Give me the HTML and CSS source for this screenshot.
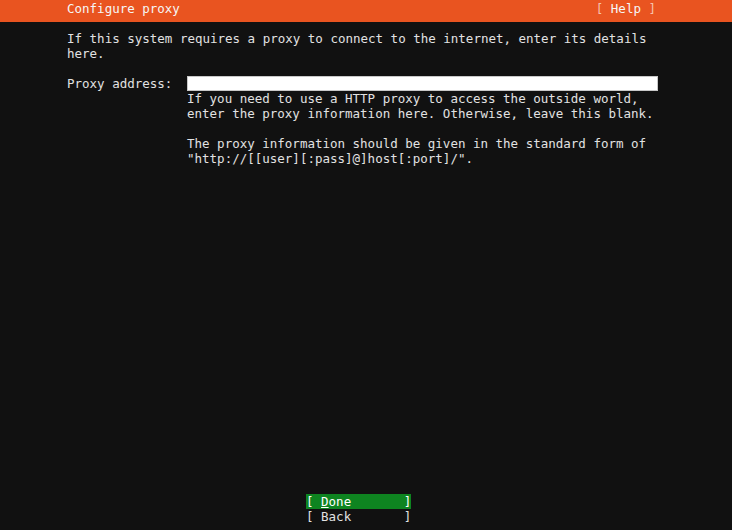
FILE: index.html
```html
<!DOCTYPE html>
<html lang="en">
<head>
  <meta charset="UTF-8">
  <meta name="viewport" content="width=device-width, initial-scale=1.0">
  <title>Configure proxy</title>
  <link rel="stylesheet" href="styles.css">
</head>
<body>
  <!-- Title bar -->
  <div class="header">
    <span class="title">Configure proxy</span>
    <span class="help"><span class="bracket">[</span> Help <span class="bracket">]</span></span>
  </div>

  <div class="main">
    <p class="intro">If this system requires a proxy to connect to the internet, enter its details<br>here.</p>

    <div class="form-row">
      <label class="label" for="proxyAddress">Proxy address:</label>
      <div class="field">
        <input type="text" id="proxyAddress" class="proxy-input">
        <p class="hint">If you need to use a HTTP proxy to access the outside world,<br>enter the proxy information here. Otherwise, leave this blank.</p>
        <p class="hint">The proxy information should be given in the standard form of<br>"http://[[user][:pass]@]host[:port]/".</p>
      </div>
    </div>
  </div>

  <!-- Buttons -->
  <div class="buttons">
    <div class="btn btn-focus">[ <span class="cursor">D</span>one       ]</div>
    <div class="btn">[ Back       ]</div>
  </div>
</body>
</html>
```

FILE: styles.css
```css
html, body {
  margin: 0;
  height: 100%;
}

body {
  background-color: #111111;
  color: #e2e2e2;
  font-family: "DejaVu Sans Mono", "Liberation Mono", monospace;
  font-size: 12.5px;
  line-height: 15px;
  display: flex;
  flex-direction: column;
  height: 530px;
  overflow: hidden;
}

p {
  margin: 0;
}

.header {
  background-color: #e95420;
  color: #f6f6f6;
  display: flex;
  justify-content: space-between;
  padding: 1px 76px 6px 67px;
}

.help .bracket {
  color: #f7c2ad;
}

.main {
  flex: 1;
  padding: 9px 75px 0 67px;
}

.intro {
  margin-bottom: 15px;
}

.form-row {
  display: flex;
}

.label {
  width: 120px;
  flex-shrink: 0;
}

.field {
  width: 471px;
}

.proxy-input {
  display: block;
  box-sizing: border-box;
  width: 471px;
  height: 15px;
  margin: 0;
  padding: 0;
  border: 1px solid #c8c8c8;
  background-color: #ffffff;
  outline: none;
}

.hint {
  margin-bottom: 15px;
}

.buttons {
  display: flex;
  flex-direction: column;
  align-items: flex-start;
  padding: 0 0 6px 306px;
}

.btn {
  white-space: pre;
  width: 105px;
  height: 15px;
}

.btn-focus {
  background-color: #0e8420;
  color: #ffffff;
}

.cursor {
  text-decoration: underline;
}
```
